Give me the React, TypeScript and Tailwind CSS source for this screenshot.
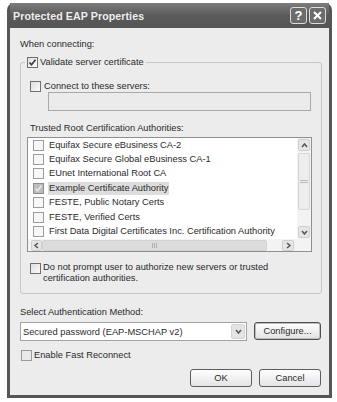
import React from "react";

type BoxProps = { checked?: boolean; dim?: boolean };

function Check({ checked, dim }: BoxProps) {
  return (
    <span
      className={
        "flex h-[11px] w-[11px] shrink-0 items-center justify-center border " +
        (dim
          ? "border-[#8c8c8c] bg-[#bdbdbd]"
          : "border-[#6f6f6f] bg-gradient-to-br from-[#dedede] to-[#fbfbfb]")
      }
    >
      {checked && (
        <svg width="9" height="9" viewBox="0 0 9 9">
          <polyline
            points="1.5,4.5 3.5,6.8 7.5,1.8"
            fill="none"
            stroke={dim ? "#e8e8e8" : "#3a3a3a"}
            strokeWidth="1.6"
          />
        </svg>
      )}
    </span>
  );
}

function Chevron({ dir }: { dir: "up" | "down" | "left" | "right" }) {
  const pts = {
    up: "2,6 4.5,3 7,6",
    down: "2,3 4.5,6 7,3",
    left: "6,2 3,4.5 6,7",
    right: "3,2 6,4.5 3,7",
  }[dir];
  return (
    <svg width="9" height="9" viewBox="0 0 9 9">
      <polyline points={pts} fill="none" stroke="#5a5a5a" strokeWidth="1.6" />
    </svg>
  );
}

const certs = [
  "Equifax Secure eBusiness CA-2",
  "Equifax Secure Global eBusiness CA-1",
  "EUnet International Root CA",
  "Example Certificate Authority",
  "FESTE, Public Notary Certs",
  "FESTE, Verified Certs",
  "First Data Digital Certificates Inc. Certification Authority",
];

export default function App() {
  return (
    <div className="h-[402px] w-[337px] overflow-hidden bg-white pl-[7px] pt-[3px] font-['Liberation_Sans',Arial,sans-serif] text-[9.3px] leading-[12px] text-[#2a2a2a]">
      {/* Window frame */}
      <div className="flex h-[395px] w-[325px] flex-col rounded-t-[7px] bg-[#565656] px-[3px] pb-[3px]">
        {/* Title bar */}
        <div className="flex h-[25px] items-center justify-between bg-gradient-to-b from-[#7d7d7d] via-[#5a5a5a] to-[#555] pl-[3px] pr-[3px]">
          <span className="text-[10.6px] font-bold tracking-[0.1px] text-[#eeeeee]">
            Protected EAP Properties
          </span>
          <div className="flex gap-[2px]">
            <div className="flex h-[17px] w-[17px] items-center justify-center rounded-[3px] border border-[#dcdcdc] bg-[#6c6c6c] text-[13px] font-bold leading-none text-white">
              ?
            </div>
            <div className="flex h-[17px] w-[17px] items-center justify-center rounded-[3px] border border-[#dcdcdc] bg-[#6c6c6c]">
              <svg width="11" height="11" viewBox="0 0 11 11">
                <path d="M2 2L9 9M9 2L2 9" stroke="#fff" strokeWidth="2" />
              </svg>
            </div>
          </div>
        </div>

        {/* Body */}
        <div className="flex flex-1 flex-col bg-[#ececec]">
          <div className="ml-[10px] mt-[10px] h-[12px]">When connecting:</div>

          {/* Group box */}
          <div className="relative ml-[10px] mt-[12px] h-[232px] w-[302px] rounded-[3px] border border-[#c6c6c6]">
            <div className="absolute left-[4px] top-[-7px] flex h-[12px] items-center gap-[2px] bg-[#ececec] px-[2px]">
              <Check checked />
              <span>Validate server certificate</span>
            </div>

            <div className="flex flex-col pl-[6px] pt-[17px]">
              <div className="ml-[3px] flex h-[12px] items-center gap-[3px]">
                <Check />
                <span>Connect to these servers:</span>
              </div>
              <div className="ml-[21px] h-[19px] w-[263px] border border-[#a9a9a9] bg-[#ebebeb]" />

              <div className="ml-[3px] mt-[11px] h-[12px]">
                Trusted Root Certification Authorities:
              </div>

              {/* Cert list */}
              <div className="mt-[3px] grid h-[115px] w-[285px] grid-cols-[1fr_14px] grid-rows-[1fr_12px] border border-[#8f8f8f] bg-white">
                <div className="overflow-hidden">
                  {certs.map((c, i) => (
                    <div key={c} className="flex h-[14.4px] items-center pl-[5px]">
                      <span className="mr-[4px]">
                        {i === 3 ? (
                          <Check checked dim />
                        ) : (
                          <span className="block h-[11px] w-[11px] border border-[#9d9d9d] bg-[#f7f7f7]" />
                        )}
                      </span>
                      <span
                        className={
                          "whitespace-nowrap px-[1px] leading-[13px] " +
                          (i === 3 ? "bg-[#dddddd]" : "")
                        }
                      >
                        {c}
                      </span>
                    </div>
                  ))}
                </div>

                {/* Vertical scrollbar */}
                <div className="flex flex-col items-center bg-[#f3f3f3] py-[1px]">
                  <div className="flex h-[12px] w-[12px] items-center justify-center rounded-[2px] border border-[#cfcfcf] bg-[#e6e6e6]">
                    <Chevron dir="up" />
                  </div>
                  <div className="mt-[2px] flex h-[57px] w-[12px] items-center justify-center rounded-[2px] border border-[#d6d6d6] bg-[#ededed]">
                    <div className="h-[3px] w-[8px] border-y border-[#b9b9b9]" />
                  </div>
                  <div className="flex-1" />
                  <div className="flex h-[12px] w-[12px] items-center justify-center rounded-[2px] border border-[#cfcfcf] bg-[#e6e6e6]">
                    <Chevron dir="down" />
                  </div>
                </div>

                {/* Horizontal scrollbar */}
                <div className="flex items-center bg-[#f3f3f3] px-[3px]">
                  <div className="flex h-[11px] w-[11px] items-center justify-center rounded-[2px] border border-[#cfcfcf] bg-[#e6e6e6]">
                    <Chevron dir="left" />
                  </div>
                  <div className="flex h-[11px] w-[225px] items-center justify-center rounded-[2px] border border-[#d2d2d2] bg-[#dcdcdc]">
                    <div className="flex gap-[1px]">
                      <span className="h-[5px] w-[1px] bg-[#b0b0b0]" />
                      <span className="h-[5px] w-[1px] bg-[#b0b0b0]" />
                      <span className="h-[5px] w-[1px] bg-[#b0b0b0]" />
                    </div>
                  </div>
                  <div className="flex-1" />
                  <div className="flex h-[11px] w-[12px] items-center justify-center rounded-[2px] border border-[#cfcfcf] bg-[#e6e6e6]">
                    <Chevron dir="right" />
                  </div>
                </div>
                <div className="bg-[#f3f3f3]" />
              </div>

              <div className="ml-[3px] mt-[10px] flex items-start gap-[2px]">
                <span className="mt-[1px]">
                  <Check />
                </span>
                <span className="w-[238px] leading-[11px]">
                  Do not prompt user to authorize new servers or trusted certification authorities.
                </span>
              </div>
            </div>
          </div>

          <div className="ml-[10px] mt-[12px] h-[12px]">Select Authentication Method:</div>

          <div className="ml-[10px] mt-[4px] flex items-start gap-[7px]">
            <div className="flex h-[19px] w-[227px] items-center justify-between border border-[#a2a2a2] bg-white pl-[2px] pr-[1px]">
              <span>Secured password (EAP-MSCHAP v2)</span>
              <div className="flex h-[15px] w-[14px] items-center justify-center rounded-[2px] border border-[#d4d4d4] bg-[#e4e4e4]">
                <Chevron dir="down" />
              </div>
            </div>
            <button className="flex h-[18px] w-[67px] items-center justify-center rounded-[3px] border border-[#4f4f4f] bg-gradient-to-b from-white to-[#e2e2e2] shadow-[inset_0_0_0_1px_#bdbdbd]">
              Configure...
            </button>
          </div>

          <div className="ml-[11px] mt-[8px] flex h-[12px] items-center gap-[2px]">
            <span className="block h-[11px] w-[11px] border border-[#9a9a9a] bg-[#e9e9e9]" />
            <span>Enable Fast Reconnect</span>
          </div>

          <div className="mt-[8px] flex justify-end gap-[7px] pr-[8px]">
            <button className="flex h-[18px] w-[62px] items-center justify-center rounded-[3px] border border-[#5d5d5d] bg-gradient-to-b from-white to-[#e4e4e4]">
              OK
            </button>
            <button className="flex h-[18px] w-[62px] items-center justify-center rounded-[3px] border border-[#5d5d5d] bg-gradient-to-b from-white to-[#e4e4e4]">
              Cancel
            </button>
          </div>
        </div>
      </div>
    </div>
  );
}
